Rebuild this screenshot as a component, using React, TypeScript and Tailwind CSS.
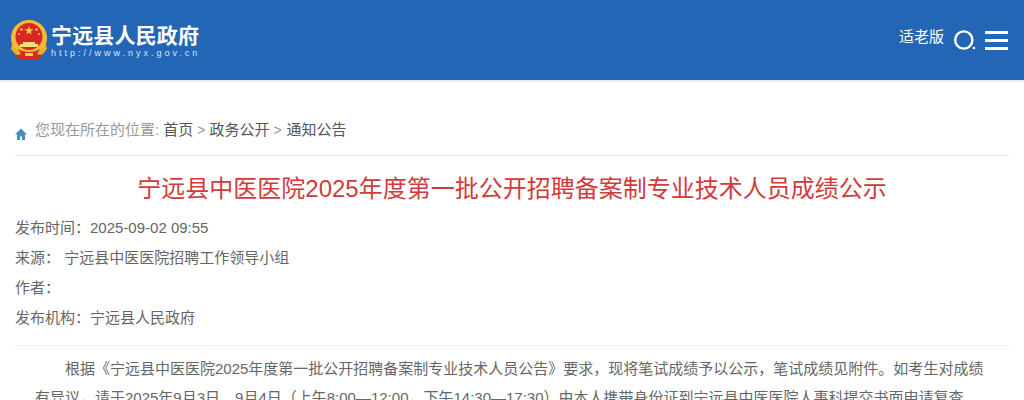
import React from "react";

const font = { cjk: "font-['Liberation_Sans','Noto_Sans_CJK_SC',sans-serif]" };

const Emblem = () => (
  <svg width="38" height="40" viewBox="0 0 38 40">
    <circle cx="19" cy="18" r="18" fill="#f3bb3c" />
    <circle cx="19" cy="16.500" r="13.500" fill="#d8281f" />
    <path d="M19 6l1.100 3.200h3.300l-2.700 2 1 3.200-2.700-2-2.700 2 1-3.200-2.700-2h3.300z" fill="#f8d24e" />
    <circle cx="11.500" cy="9.500" r="1.200" fill="#f8d24e" />
    <circle cx="26.500" cy="9.500" r="1.200" fill="#f8d24e" />
    <circle cx="9" cy="14" r="1" fill="#f8d24e" />
    <circle cx="29" cy="14" r="1" fill="#f8d24e" />
    <path d="M13 22h12v2h3v3H10v-3h3z" fill="#f8dc7a" />
    <path d="M2 24c3 5 6 7 10 8h14c4-1 7-3 10-8l1 5-4 5-6 2H11l-6-2-4-5z" fill="#f0ad26" />
    <path d="M8 29c3 2 7 3 11 3s8-1 11-3l-3 5H11z" fill="#c9341e" />
    <path d="M6 36l7-3h12l7 3-3 3H9z" fill="#d8281f" />
    <path d="M15 33h8v3h-8z" fill="#f8d24e" />
  </svg>
);

const App = () => {
  return (
    <div className={`w-[1024px] h-[400px] overflow-hidden bg-white ${font.cjk}`}>
      <header className="h-[80px] bg-[#2266b5] flex items-center justify-between pl-[10px] pr-[16px] shadow-[0_1px_2px_rgba(0,0,0,0.15)]">
        <div className="flex items-center gap-[4px]">
          <Emblem />
          <div className="flex flex-col pt-[3px] -ml-[1px]">
            <span className="text-[21px] leading-[24px] font-bold text-white tracking-[0.15px]">宁远县人民政府</span>
            <span className="text-[9px] leading-[11px] text-[#dbe7f6] tracking-[3px]">http://www.nyx.gov.cn</span>
          </div>
        </div>
        <div className="flex items-center">
          <span className="text-[15px] text-white mr-[10px] mb-[6px]">适老版</span>
          <svg width="22" height="22" viewBox="0 0 22 22" className="mr-[9px]">
            <circle cx="9.800" cy="11" r="8.600" fill="none" stroke="#fff" strokeWidth="2.400" />
            <circle cx="20" cy="19" r="1.300" fill="#fff" />
          </svg>
          <div className="flex flex-col gap-[5px] w-[23px]">
            <div className="h-[3px] bg-white" />
            <div className="h-[3px] bg-white" />
            <div className="h-[3px] bg-white" />
          </div>
        </div>
      </header>

      <main className="px-[15px]">
        <div className="flex items-center h-[76px] pt-[26px] border-b border-[#e5e5e5] text-[15px]">
          <svg width="12" height="12" viewBox="0 0 12 12" className="mt-[6px] mr-[8px]">
            <path d="M6 0.500L0 6.500H2V12H5V8.500H7V12H10V6.500H12z" fill="#4c8ec2" />
          </svg>
          <span className="text-[#999]">您现在所在的位置:</span>
          <span className="text-[#555] ml-[4px]">首页</span>
          <span className="text-[#999] text-[14px] mx-[4px]">&gt;</span>
          <span className="text-[#555]">政务公开</span>
          <span className="text-[#999] text-[14px] ml-[4px] mr-[5px]">&gt;</span>
          <span className="text-[#555]">通知公告</span>
        </div>

        <h1 className="text-center text-[#d13b3b] text-[24px] leading-[30px] mt-[18px]">
          宁远县中医医院2025年度第一批公开招聘备案制专业技术人员成绩公示
        </h1>

        <div className="mt-[9px] text-[15px] text-[#666] border-b border-[#eeeeee] pb-[12px]">
          <p className="leading-[30px]">发布时间：2025-09-02 09:55</p>
          <p className="leading-[30px]">来源： 宁远县中医医院招聘工作领导小组</p>
          <p className="leading-[30px]">作者：</p>
          <p className="leading-[30px]">发布机构：宁远县人民政府</p>
        </div>

        <div className="px-[20px] pt-[8px] text-[15px] leading-[29px] text-[#666]">
          <p className="indent-[30px]">
            根据《宁远县中医医院2025年度第一批公开招聘备案制专业技术人员公告》要求，现将笔试成绩予以公示，笔试成绩见附件。如考生对成绩有异议，请于2025年9月3日、9月4日（上午8:00—12:00，下午14:30—17:30）由本人携带身份证到宁远县中医医院人事科提交书面申请复查。
          </p>
        </div>
      </main>
    </div>
  );
};

export default App;
